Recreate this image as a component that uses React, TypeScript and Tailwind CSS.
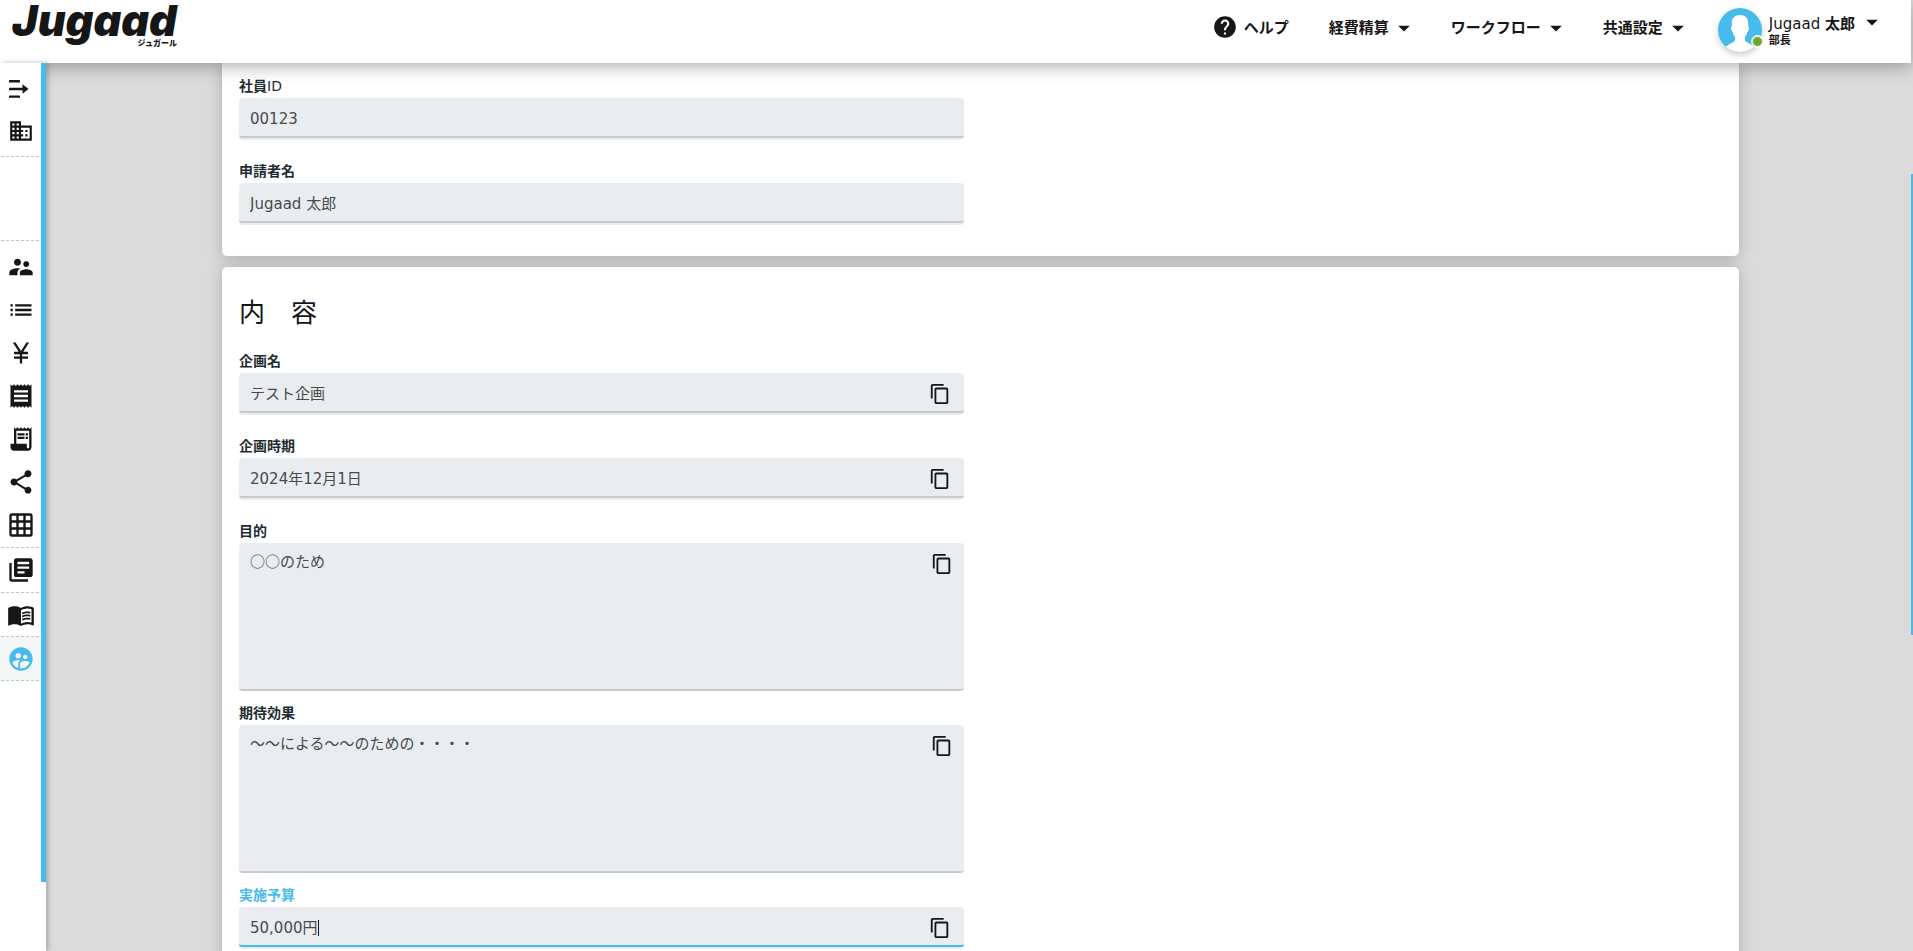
import type { ReactNode } from "react";
import {
  MdArrowDropDown,
  MdBusiness,
  MdContentCopy,
  MdCurrencyYen,
  MdGridOn,
  MdHelp,
  MdLibraryBooks,
  MdList,
  MdMenuBook,
  MdReceipt,
  MdReceiptLong,
  MdShare,
  MdSupervisedUserCircle,
  MdSupervisorAccount,
} from "react-icons/md";

function ExpandIcon() {
  return (
    <svg width="20" height="18" viewBox="0 0 20 18" fill="currentColor" aria-hidden="true">
      <rect x="0" y="0" width="11" height="2.4" rx="0.5" />
      <rect x="0" y="7.800" width="15" height="2.400" rx="0.5" />
      <rect x="0" y="15.400" width="11" height="2.400" rx="0.5" />
      <path d="M13.500 4.300 19.500 9l-6 4.700z" />
    </svg>
  );
}

function Avatar() {
  return (
    <span className="relative mr-[7px] block size-11 rounded-full shadow-[0_3px_6px_rgba(0,0,0,0.2)]">
      <svg viewBox="0 0 44 44" className="block size-11" aria-hidden="true">
        <defs>
          <clipPath id="avatar-circle">
            <circle cx="22" cy="22" r="22" />
          </clipPath>
        </defs>
        <g clipPath="url(#avatar-circle)">
          <rect width="44" height="44" fill="#46bbec" />
          <path
            fill="#fff"
            d="M22 7c5.500 0 8.200 3.200 8.200 8v3.500c1.200.3.900 4.800-.9 5.500-.5 2-1.200 3.600-2.300 4.800v3.400c1.500 2.800 6.500 3.500 9.900 7.300L34 46H10l-2.900-6.500c3.400-3.800 8.400-4.500 9.900-7.300v-3.400c-1.100-1.200-1.800-2.800-2.300-4.800-1.800-.7-2.100-5.200-.9-5.500V15c0-4.800 2.700-8 8.200-8z"
          />
        </g>
      </svg>
      <span className="absolute -right-px bottom-[5px] size-[11px] rounded-full border border-white bg-[#6caa28] outline outline-white" />
    </span>
  );
}

function NavMenu({ label, className }: { label: string; className: string }) {
  return (
    <button type="button" className={`flex items-center gap-px font-bold ${className}`}>
      <span className="leading-5">{label}</span>
      <MdArrowDropDown size={28} />
    </button>
  );
}

function Header() {
  return (
    <header className="relative z-10 flex h-[63px] shrink-0 items-start justify-between bg-white pr-[25px] text-[15px] text-[#161616] shadow-[0_4px_16px_rgba(0,0,0,0.3)]">
      <a href="#" className="ml-3 flex w-[165px] flex-col">
        <span className="block h-[38px] font-['Inter'] text-[43px] leading-[41px] font-black italic">Jugaad</span>
        <span className="block self-end text-[8px] leading-3 font-black whitespace-nowrap">ジュガール</span>
      </a>
      <nav className="flex items-start">
        <a href="#" className="mt-[14px] mr-10 flex items-center gap-[6px] font-bold">
          <MdHelp size={26} />
          <span className="mt-px leading-5">ヘルプ</span>
        </a>
        <NavMenu label="経費精算" className="mt-[14px] mr-[33px]" />
        <NavMenu label="ワークフロー" className="mt-[14px] mr-[33px]" />
        <NavMenu label="共通設定" className="mt-[14px] mr-[26px]" />
        <button type="button" className="mt-2 flex items-start text-left">
          <Avatar />
          <span className="mt-[6px] mr-[3px] block">
            <span className="block leading-5">
              Jugaad <b>太郎</b>
            </span>
            <b className="block text-[11px] leading-[14px]">部長</b>
          </span>
          <MdArrowDropDown size={28} />
        </button>
      </nav>
    </header>
  );
}

function SideItem({ label, active, children, size }: { label: string; active?: boolean; children: ReactNode; size: string }) {
  return (
    <a
      href="#"
      aria-label={label}
      className={`flex w-full items-center justify-center pl-px ${size} ${active ? "bg-[#f3f7f8] text-[#46bbec]" : ""}`}
    >
      {children}
    </a>
  );
}

function Divider() {
  return <div className="mr-[2px] ml-px border-t border-dashed border-[#c4c4c4]" />;
}

function Sidebar() {
  return (
    <aside className="relative z-20 flex w-[46px] shrink-0 items-start bg-white text-[#161616] shadow-[2px_0_5px_rgba(0,0,0,0.25)]">
      <nav className="w-[41px] pt-1">
        <button type="button" aria-label="メニューを開く" className="flex h-[43px] w-full items-center pl-[9px]">
          <ExpandIcon />
        </button>
        <SideItem label="会社" size="h-[46px] pb-1"><MdBusiness size={26} /></SideItem>
        <Divider />
        <div className="h-[83px]" />
        <Divider />
        <div className="pt-1 pb-px">
          <SideItem label="社員" size="h-[43px]"><MdSupervisorAccount size={28} /></SideItem>
          <SideItem label="一覧" size="h-[43px]"><MdList size={28} /></SideItem>
          <SideItem label="経費" size="h-[43px]"><MdCurrencyYen size={28} /></SideItem>
          <SideItem label="領収書" size="h-[43px]"><MdReceipt size={28} /></SideItem>
          <SideItem label="明細" size="h-[43px]"><MdReceiptLong size={28} /></SideItem>
          <SideItem label="共有" size="h-[43px]"><MdShare size={28} /></SideItem>
          <SideItem label="表" size="h-[43px]"><MdGridOn size={28} /></SideItem>
        </div>
        <Divider />
        <SideItem label="書類" size="h-11"><MdLibraryBooks size={28} /></SideItem>
        <Divider />
        <SideItem label="マニュアル" size="h-[43px]"><MdMenuBook size={28} /></SideItem>
        <Divider />
        <SideItem label="ワークフロー申請" size="h-[43px]" active><MdSupervisedUserCircle size={28} /></SideItem>
        <Divider />
      </nav>
      <div className="h-[calc(100%-69px)] w-[5px] bg-[#46bbec]" />
    </aside>
  );
}

interface FieldProps {
  id: string;
  label: string;
  value: string;
  copy?: boolean;
  multiline?: boolean;
  focused?: boolean;
}

function Field({ id, label, value, copy, multiline, focused }: FieldProps) {
  const line = focused ? "border-[#46bbec]" : "border-[#c8cacb]";
  return (
    <div className={multiline ? "mb-3" : "mb-[21px]"}>
      <label
        htmlFor={id}
        className={`mb-[2px] block text-[14px] leading-5 ${focused ? "text-[#46bbec]" : "text-[#1f2d33]"}`}
      >
        {label.endsWith("ID") ? (
          <>
            <b>{label.slice(0, -2)}</b>ID
          </>
        ) : (
          <b>{label}</b>
        )}
      </label>
      {multiline ? (
        <div className={`flex h-[148px] items-start rounded-[4px] border-b-2 bg-[#e9edf0] pr-[11px] ${line}`}>
          <textarea
            id={id}
            defaultValue={value}
            className="h-full min-w-0 flex-1 resize-none bg-transparent px-[11px] py-[6px] font-['Noto_Sans_CJK_JP',sans-serif] text-[15px] leading-6 text-[#4a4a4a] outline-none"
          />
          <button type="button" aria-label={`${label}をコピー`} className="mt-[10px] text-[#161616]">
            <MdContentCopy size={22} />
          </button>
        </div>
      ) : (
        <div className="rounded-[4px] bg-[#e9edf0] pb-[2px]">
          <div className={`flex h-10 items-center rounded-b-[3px] border-b-2 pt-1 pr-[13px] ${line}`}>
            <span className="grid min-w-0 flex-1 items-center">
              <input
                id={id}
                type="text"
                defaultValue={value}
                className="col-start-1 row-start-1 w-full bg-transparent px-[11px] text-[15px] leading-6 text-[#4a4a4a] outline-none"
              />
              {focused && (
                <span className="pointer-events-none col-start-1 row-start-1 flex items-center pl-[11px] text-[15px]" aria-hidden="true">
                  <span className="invisible">{value}</span>
                  <span className="h-4 w-px bg-[#161616]" />
                </span>
              )}
            </span>
            {copy && (
              <button type="button" aria-label={`${label}をコピー`} className="text-[#161616]">
                <MdContentCopy size={22} />
              </button>
            )}
          </div>
        </div>
      )}
    </div>
  );
}

const cardShadow = "shadow-[0_2px_16px_rgba(0,0,0,0.22)]";

export default function App() {
  return (
    <div className="flex h-screen overflow-hidden bg-[#dbdbdb] font-['DejaVu_Sans','Noto_Sans_CJK_JP',sans-serif]">
      <div className="flex min-w-0 flex-1 flex-col">
        <Header />
        <div className="flex min-h-0 flex-1">
          <Sidebar />
          <main className="min-w-0 flex-1 overflow-hidden pr-[172px] pl-44">
            <section className={`rounded-b-[5px] bg-white px-[17px] pt-[13px] pb-[10px] ${cardShadow}`}>
              <div className="grid grid-cols-2 gap-x-[33px]">
                <div>
                  <Field id="employee-id" label="社員ID" value="00123" />
                  <Field id="applicant" label="申請者名" value="Jugaad 太郎" />
                </div>
              </div>
            </section>
            <section className={`mt-[11px] rounded-[5px] bg-white px-[17px] pt-[30px] pb-10 ${cardShadow}`}>
              <h2 className="mb-[22px] text-[26px] leading-8 text-[#161616]">内　容</h2>
              <div className="grid grid-cols-2 gap-x-[33px]">
                <div>
                  <Field id="plan-name" label="企画名" value="テスト企画" copy />
                  <Field id="plan-date" label="企画時期" value="2024年12月1日" copy />
                  <Field id="purpose" label="目的" value="○○のため" multiline />
                  <Field id="effect" label="期待効果" value="～～による～～のための・・・・" multiline />
                  <Field id="budget" label="実施予算" value="50,000円" copy focused />
                </div>
              </div>
            </section>
          </main>
        </div>
      </div>
      <div className="w-[2px] shrink-0 pt-[174px]">
        <div className="h-[461px] bg-[#46bbec]" />
      </div>
    </div>
  );
}
